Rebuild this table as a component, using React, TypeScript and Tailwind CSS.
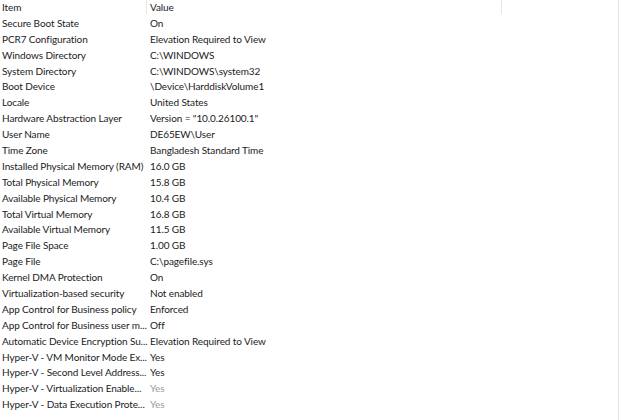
import React from "react";

const rows: [string, string, boolean?][] = [
  ["Secure Boot State", "On"],
  ["PCR7 Configuration", "Elevation Required to View"],
  ["Windows Directory", "C:\\WINDOWS"],
  ["System Directory", "C:\\WINDOWS\\system32"],
  ["Boot Device", "\\Device\\HarddiskVolume1"],
  ["Locale", "United States"],
  ["Hardware Abstraction Layer", 'Version = "10.0.26100.1"'],
  ["User Name", "DE65EW\\User"],
  ["Time Zone", "Bangladesh Standard Time"],
  ["Installed Physical Memory (RAM)", "16.0 GB"],
  ["Total Physical Memory", "15.8 GB"],
  ["Available Physical Memory", "10.4 GB"],
  ["Total Virtual Memory", "16.8 GB"],
  ["Available Virtual Memory", "11.5 GB"],
  ["Page File Space", "1.00 GB"],
  ["Page File", "C:\\pagefile.sys"],
  ["Kernel DMA Protection", "On"],
  ["Virtualization-based security", "Not enabled"],
  ["App Control for Business policy", "Enforced"],
  ["App Control for Business user m...", "Off"],
  ["Automatic Device Encryption Su...", "Elevation Required to View"],
  ["Hyper-V - VM Monitor Mode Ex...", "Yes"],
  ["Hyper-V - Second Level Address...", "Yes"],
  ["Hyper-V - Virtualization Enable...", "Yes", true],
  ["Hyper-V - Data Execution Prote...", "Yes", true],
];

export default function App() {
  return (
    <div
      className="w-[619px] h-[420px] bg-white overflow-hidden flex text-[10px] tracking-[-0.1px] text-[#1b1b1b]"
      style={{ fontFamily: 'Lato, "Noto Sans", sans-serif' }}
    >
      <div className="flex-1 flex flex-col">
        <div className="flex h-[15.9px] items-center">
          <div className="w-[146px] pl-[2px] leading-[15.9px]">Item</div>
          <div className="w-px h-[14px] self-start bg-[#e8e8e8]" />
          <div className="w-[354px] pl-[3px] leading-[15.9px]">Value</div>
          <div className="w-px h-[14px] self-start bg-[#e8e8e8]" />
        </div>
        {rows.map(([k, v, dim]) => (
          <div key={k} className="flex h-[15.9px] items-center leading-[15.9px] whitespace-nowrap">
            <div className="w-[148px] pl-[2px]">{k}</div>
            <div className={"pl-[2px] " + (dim ? "text-[#9a9a9a]" : "")}>{v}</div>
          </div>
        ))}
      </div>
      <div className="w-px bg-[#e3e3e3]" />
    </div>
  );
}
